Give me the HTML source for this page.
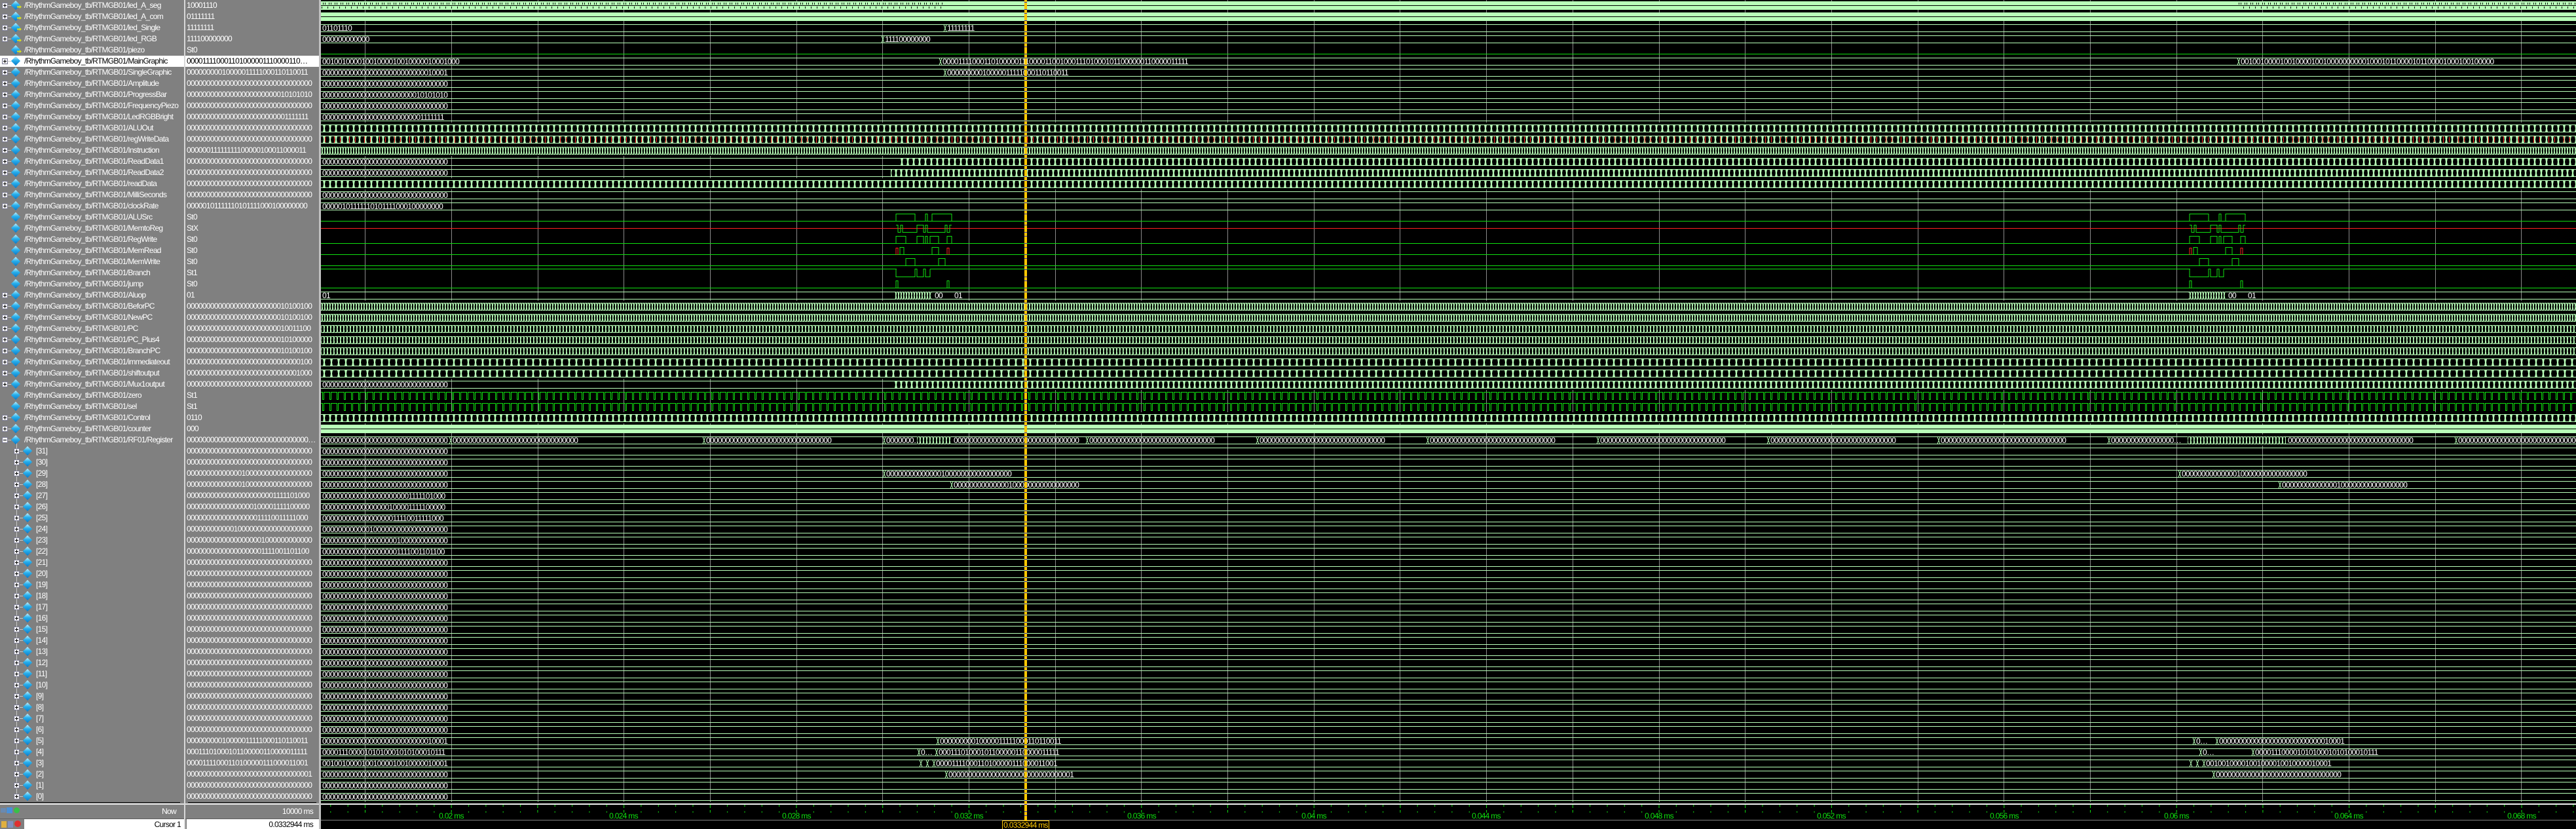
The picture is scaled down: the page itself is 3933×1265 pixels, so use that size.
<!DOCTYPE html>
<html><head><meta charset="utf-8">
<style>
*{box-sizing:border-box}
body{margin:0;width:3933px;height:1265px;background:#000;position:relative;overflow:hidden;font-family:"Liberation Sans",sans-serif;font-size:12px;letter-spacing:-0.7px}
#names{position:absolute;left:0;top:0;width:281px;height:1224px;background:#808080}
#vals{position:absolute;left:283px;top:0;width:204px;height:1224px;background:#808080}
#sep1{position:absolute;left:281px;top:0;width:2px;height:1265px;background:#d8d8d8}
#sep2{position:absolute;left:487px;top:0;width:3px;height:1265px;background:#c0c0c0}
.r{height:17px;position:relative;color:#fff;white-space:nowrap}
.r span{position:absolute;left:37px;top:1px;line-height:15px}
.c span{left:55px}
.sel{background:#fff;color:#000}
.pb{position:absolute;left:3px;top:4px;width:9px;height:9px;background:#f2f2f6;border:1px solid #7a7a90}
.c .pb{left:21px}
.pb:before{content:"";position:absolute;left:1px;top:3px;width:5px;height:1px;background:#000}
.pb.p:after{content:"";position:absolute;left:3px;top:1px;width:1px;height:5px;background:#000}
.ln{position:absolute;left:12px;top:8px;width:5px;height:1px;background:#c8c8c8}
.c .ln{left:30px}
.dm{position:absolute;left:19px;top:3px;width:10px;height:10px;transform:rotate(45deg);background:linear-gradient(135deg,#c8f4ff,#28b0ec 45%,#0a78c8)}
.c .dm{left:37px}
.ar{position:absolute;left:26px;top:8px;width:7px;height:5px;background:#d8e020;clip-path:polygon(0 30%,55% 30%,55% 0,100% 50%,55% 100%,55% 70%,0 70%)}
.tree{position:absolute;left:25px;top:672px;width:1px;height:548px;background:#c8c8c8}
#vals .r span{left:2px}
#bot{position:absolute;left:0;top:1224px;width:487px;height:41px;background:#808080}
svg text{font-family:"Liberation Sans",sans-serif;font-size:12px;letter-spacing:-0.7px}
</style></head><body>
<div id="names">
<div class="tree"></div>
<div class="r"><i class="pb p"></i><i class="ln"></i><i class="dm"></i><i class="ar"></i><span>/RhythmGameboy_tb/RTMGB01/led_A_seg</span></div>
<div class="r"><i class="pb p"></i><i class="ln"></i><i class="dm"></i><i class="ar"></i><span>/RhythmGameboy_tb/RTMGB01/led_A_com</span></div>
<div class="r"><i class="pb p"></i><i class="ln"></i><i class="dm"></i><i class="ar"></i><span>/RhythmGameboy_tb/RTMGB01/led_Single</span></div>
<div class="r"><i class="pb p"></i><i class="ln"></i><i class="dm"></i><i class="ar"></i><span>/RhythmGameboy_tb/RTMGB01/led_RGB</span></div>
<div class="r"><i class="dm"></i><i class="ar"></i><span>/RhythmGameboy_tb/RTMGB01/piezo</span></div>
<div class="r sel"><i class="pb p"></i><i class="ln"></i><i class="dm"></i><span>/RhythmGameboy_tb/RTMGB01/MainGraphic</span></div>
<div class="r"><i class="pb p"></i><i class="ln"></i><i class="dm"></i><span>/RhythmGameboy_tb/RTMGB01/SingleGraphic</span></div>
<div class="r"><i class="pb p"></i><i class="ln"></i><i class="dm"></i><span>/RhythmGameboy_tb/RTMGB01/Amplitude</span></div>
<div class="r"><i class="pb p"></i><i class="ln"></i><i class="dm"></i><span>/RhythmGameboy_tb/RTMGB01/ProgressBar</span></div>
<div class="r"><i class="pb p"></i><i class="ln"></i><i class="dm"></i><span>/RhythmGameboy_tb/RTMGB01/FrequencyPiezo</span></div>
<div class="r"><i class="pb p"></i><i class="ln"></i><i class="dm"></i><span>/RhythmGameboy_tb/RTMGB01/LedRGBBright</span></div>
<div class="r"><i class="pb p"></i><i class="ln"></i><i class="dm"></i><span>/RhythmGameboy_tb/RTMGB01/ALUOut</span></div>
<div class="r"><i class="pb p"></i><i class="ln"></i><i class="dm"></i><span>/RhythmGameboy_tb/RTMGB01/regWriteData</span></div>
<div class="r"><i class="pb p"></i><i class="ln"></i><i class="dm"></i><span>/RhythmGameboy_tb/RTMGB01/Instruction</span></div>
<div class="r"><i class="pb p"></i><i class="ln"></i><i class="dm"></i><span>/RhythmGameboy_tb/RTMGB01/ReadData1</span></div>
<div class="r"><i class="pb p"></i><i class="ln"></i><i class="dm"></i><span>/RhythmGameboy_tb/RTMGB01/ReadData2</span></div>
<div class="r"><i class="pb p"></i><i class="ln"></i><i class="dm"></i><span>/RhythmGameboy_tb/RTMGB01/readData</span></div>
<div class="r"><i class="pb p"></i><i class="ln"></i><i class="dm"></i><span>/RhythmGameboy_tb/RTMGB01/MilliSeconds</span></div>
<div class="r"><i class="pb p"></i><i class="ln"></i><i class="dm"></i><span>/RhythmGameboy_tb/RTMGB01/clockRate</span></div>
<div class="r"><i class="dm"></i><span>/RhythmGameboy_tb/RTMGB01/ALUSrc</span></div>
<div class="r"><i class="dm"></i><span>/RhythmGameboy_tb/RTMGB01/MemtoReg</span></div>
<div class="r"><i class="dm"></i><span>/RhythmGameboy_tb/RTMGB01/RegWrite</span></div>
<div class="r"><i class="dm"></i><span>/RhythmGameboy_tb/RTMGB01/MemRead</span></div>
<div class="r"><i class="dm"></i><span>/RhythmGameboy_tb/RTMGB01/MemWrite</span></div>
<div class="r"><i class="dm"></i><span>/RhythmGameboy_tb/RTMGB01/Branch</span></div>
<div class="r"><i class="dm"></i><span>/RhythmGameboy_tb/RTMGB01/jump</span></div>
<div class="r"><i class="pb p"></i><i class="ln"></i><i class="dm"></i><span>/RhythmGameboy_tb/RTMGB01/Aluop</span></div>
<div class="r"><i class="pb p"></i><i class="ln"></i><i class="dm"></i><span>/RhythmGameboy_tb/RTMGB01/BeforPC</span></div>
<div class="r"><i class="pb p"></i><i class="ln"></i><i class="dm"></i><span>/RhythmGameboy_tb/RTMGB01/NewPC</span></div>
<div class="r"><i class="pb p"></i><i class="ln"></i><i class="dm"></i><span>/RhythmGameboy_tb/RTMGB01/PC</span></div>
<div class="r"><i class="pb p"></i><i class="ln"></i><i class="dm"></i><span>/RhythmGameboy_tb/RTMGB01/PC_Plus4</span></div>
<div class="r"><i class="pb p"></i><i class="ln"></i><i class="dm"></i><span>/RhythmGameboy_tb/RTMGB01/BranchPC</span></div>
<div class="r"><i class="pb p"></i><i class="ln"></i><i class="dm"></i><span>/RhythmGameboy_tb/RTMGB01/immediateout</span></div>
<div class="r"><i class="pb p"></i><i class="ln"></i><i class="dm"></i><span>/RhythmGameboy_tb/RTMGB01/shiftoutput</span></div>
<div class="r"><i class="pb p"></i><i class="ln"></i><i class="dm"></i><span>/RhythmGameboy_tb/RTMGB01/Mux1output</span></div>
<div class="r"><i class="dm"></i><span>/RhythmGameboy_tb/RTMGB01/zero</span></div>
<div class="r"><i class="dm"></i><span>/RhythmGameboy_tb/RTMGB01/sel</span></div>
<div class="r"><i class="pb p"></i><i class="ln"></i><i class="dm"></i><span>/RhythmGameboy_tb/RTMGB01/Control</span></div>
<div class="r"><i class="pb p"></i><i class="ln"></i><i class="dm"></i><span>/RhythmGameboy_tb/RTMGB01/counter</span></div>
<div class="r"><i class="pb"></i><i class="ln"></i><i class="dm"></i><span>/RhythmGameboy_tb/RTMGB01/RF01/Register</span></div>
<div class="r c"><i class="pb p"></i><i class="ln"></i><i class="dm"></i><span>[31]</span></div>
<div class="r c"><i class="pb p"></i><i class="ln"></i><i class="dm"></i><span>[30]</span></div>
<div class="r c"><i class="pb p"></i><i class="ln"></i><i class="dm"></i><span>[29]</span></div>
<div class="r c"><i class="pb p"></i><i class="ln"></i><i class="dm"></i><span>[28]</span></div>
<div class="r c"><i class="pb p"></i><i class="ln"></i><i class="dm"></i><span>[27]</span></div>
<div class="r c"><i class="pb p"></i><i class="ln"></i><i class="dm"></i><span>[26]</span></div>
<div class="r c"><i class="pb p"></i><i class="ln"></i><i class="dm"></i><span>[25]</span></div>
<div class="r c"><i class="pb p"></i><i class="ln"></i><i class="dm"></i><span>[24]</span></div>
<div class="r c"><i class="pb p"></i><i class="ln"></i><i class="dm"></i><span>[23]</span></div>
<div class="r c"><i class="pb p"></i><i class="ln"></i><i class="dm"></i><span>[22]</span></div>
<div class="r c"><i class="pb p"></i><i class="ln"></i><i class="dm"></i><span>[21]</span></div>
<div class="r c"><i class="pb p"></i><i class="ln"></i><i class="dm"></i><span>[20]</span></div>
<div class="r c"><i class="pb p"></i><i class="ln"></i><i class="dm"></i><span>[19]</span></div>
<div class="r c"><i class="pb p"></i><i class="ln"></i><i class="dm"></i><span>[18]</span></div>
<div class="r c"><i class="pb p"></i><i class="ln"></i><i class="dm"></i><span>[17]</span></div>
<div class="r c"><i class="pb p"></i><i class="ln"></i><i class="dm"></i><span>[16]</span></div>
<div class="r c"><i class="pb p"></i><i class="ln"></i><i class="dm"></i><span>[15]</span></div>
<div class="r c"><i class="pb p"></i><i class="ln"></i><i class="dm"></i><span>[14]</span></div>
<div class="r c"><i class="pb p"></i><i class="ln"></i><i class="dm"></i><span>[13]</span></div>
<div class="r c"><i class="pb p"></i><i class="ln"></i><i class="dm"></i><span>[12]</span></div>
<div class="r c"><i class="pb p"></i><i class="ln"></i><i class="dm"></i><span>[11]</span></div>
<div class="r c"><i class="pb p"></i><i class="ln"></i><i class="dm"></i><span>[10]</span></div>
<div class="r c"><i class="pb p"></i><i class="ln"></i><i class="dm"></i><span>[9]</span></div>
<div class="r c"><i class="pb p"></i><i class="ln"></i><i class="dm"></i><span>[8]</span></div>
<div class="r c"><i class="pb p"></i><i class="ln"></i><i class="dm"></i><span>[7]</span></div>
<div class="r c"><i class="pb p"></i><i class="ln"></i><i class="dm"></i><span>[6]</span></div>
<div class="r c"><i class="pb p"></i><i class="ln"></i><i class="dm"></i><span>[5]</span></div>
<div class="r c"><i class="pb p"></i><i class="ln"></i><i class="dm"></i><span>[4]</span></div>
<div class="r c"><i class="pb p"></i><i class="ln"></i><i class="dm"></i><span>[3]</span></div>
<div class="r c"><i class="pb p"></i><i class="ln"></i><i class="dm"></i><span>[2]</span></div>
<div class="r c"><i class="pb p"></i><i class="ln"></i><i class="dm"></i><span>[1]</span></div>
<div class="r c"><i class="pb p"></i><i class="ln"></i><i class="dm"></i><span>[0]</span></div>
</div>
<div id="vals">
<div class="r"><span>10001110</span></div>
<div class="r"><span>01111111</span></div>
<div class="r"><span>11111111</span></div>
<div class="r"><span>111100000000</span></div>
<div class="r"><span>St0</span></div>
<div class="r sel"><span>000011110001101000001110000110…</span></div>
<div class="r"><span>00000000010000011111000110110011</span></div>
<div class="r"><span>00000000000000000000000000000000</span></div>
<div class="r"><span>00000000000000000000000010101010</span></div>
<div class="r"><span>00000000000000000000000000000000</span></div>
<div class="r"><span>00000000000000000000000001111111</span></div>
<div class="r"><span>00000000000000000000000000000000</span></div>
<div class="r"><span>00000000000000000000000000000000</span></div>
<div class="r"><span>00000011111111100000100011000011</span></div>
<div class="r"><span>00000000000000000000000000000000</span></div>
<div class="r"><span>00000000000000000000000000000000</span></div>
<div class="r"><span>00000000000000000000000000000000</span></div>
<div class="r"><span>00000000000000000000000000000000</span></div>
<div class="r"><span>00000101111110101111000100000000</span></div>
<div class="r"><span>St0</span></div>
<div class="r"><span>StX</span></div>
<div class="r"><span>St0</span></div>
<div class="r"><span>St0</span></div>
<div class="r"><span>St0</span></div>
<div class="r"><span>St1</span></div>
<div class="r"><span>St0</span></div>
<div class="r"><span>01</span></div>
<div class="r"><span>00000000000000000000000010100100</span></div>
<div class="r"><span>00000000000000000000000010100100</span></div>
<div class="r"><span>00000000000000000000000010011100</span></div>
<div class="r"><span>00000000000000000000000010100000</span></div>
<div class="r"><span>00000000000000000000000010100100</span></div>
<div class="r"><span>00000000000000000000000000000100</span></div>
<div class="r"><span>00000000000000000000000000001000</span></div>
<div class="r"><span>00000000000000000000000000000000</span></div>
<div class="r"><span>St1</span></div>
<div class="r"><span>St1</span></div>
<div class="r"><span>0110</span></div>
<div class="r"><span>000</span></div>
<div class="r"><span>0000000000000000000000000000000…</span></div>
<div class="r"><span>00000000000000000000000000000000</span></div>
<div class="r"><span>00000000000000000000000000000000</span></div>
<div class="r"><span>00000000000000100000000000000000</span></div>
<div class="r"><span>00000000000000100000000000000000</span></div>
<div class="r"><span>00000000000000000000001111101000</span></div>
<div class="r"><span>00000000000000000100001111100000</span></div>
<div class="r"><span>00000000000000000011110011111000</span></div>
<div class="r"><span>00000000000010000000000000000000</span></div>
<div class="r"><span>00000000000000000001000000000000</span></div>
<div class="r"><span>00000000000000000001111001101100</span></div>
<div class="r"><span>00000000000000000000000000000000</span></div>
<div class="r"><span>00000000000000000000000000000000</span></div>
<div class="r"><span>00000000000000000000000000000000</span></div>
<div class="r"><span>00000000000000000000000000000000</span></div>
<div class="r"><span>00000000000000000000000000000000</span></div>
<div class="r"><span>00000000000000000000000000000000</span></div>
<div class="r"><span>00000000000000000000000000000000</span></div>
<div class="r"><span>00000000000000000000000000000000</span></div>
<div class="r"><span>00000000000000000000000000000000</span></div>
<div class="r"><span>00000000000000000000000000000000</span></div>
<div class="r"><span>00000000000000000000000000000000</span></div>
<div class="r"><span>00000000000000000000000000000000</span></div>
<div class="r"><span>00000000000000000000000000000000</span></div>
<div class="r"><span>00000000000000000000000000000000</span></div>
<div class="r"><span>00000000000000000000000000000000</span></div>
<div class="r"><span>00000000000000000000000000000000</span></div>
<div class="r"><span>00000000010000011111000110110011</span></div>
<div class="r"><span>00011101000101100000110000011111</span></div>
<div class="r"><span>00001111000110100000111000011001</span></div>
<div class="r"><span>00000000000000000000000000000001</span></div>
<div class="r"><span>00000000000000000000000000000000</span></div>
<div class="r"><span>00000000000000000000000000000000</span></div>
</div>
<div id="bot">
  <div style="position:absolute;left:0;top:0;width:275px;height:1px;background:#000"></div>
  <div style="position:absolute;left:287px;top:0;width:196px;height:1px;background:#000"></div>
  <div style="position:absolute;left:0;top:2px;width:487px;height:2px;background:#e0e0e0"></div>
  <div style="position:absolute;left:1px;top:9px;width:8px;height:7px;background:#6a8ab0"></div>
  <div style="position:absolute;left:10px;top:8px;width:9px;height:9px;background:#4a90d8"></div>
  <div style="position:absolute;left:21px;top:8px;width:9px;height:9px;border-radius:50%;background:#38c048"></div>
  <div style="position:absolute;right:218px;top:7px;color:#fff;line-height:14px">Now</div>
  <div style="position:absolute;right:9px;top:7px;color:#fff;line-height:14px">10000 ms</div>
  <div style="position:absolute;left:0;top:25px;width:487px;height:1px;background:#606060"></div>
  <div style="position:absolute;left:2px;top:29px;width:8px;height:10px;background:#e0b040"></div>
  <div style="position:absolute;left:12px;top:29px;width:8px;height:10px;background:#8090c0"></div>
  <div style="position:absolute;left:22px;top:28px;width:10px;height:10px;border-radius:50%;background:#e03030"></div>
  <div style="position:absolute;left:37px;top:26px;width:244px;height:15px;background:#fff"></div>
  <div style="position:absolute;left:285px;top:26px;width:202px;height:15px;background:#fff"></div>
  <div style="position:absolute;right:211px;top:27px;color:#000;line-height:14px">Cursor 1</div>
  <div style="position:absolute;right:9px;top:27px;color:#000;line-height:14px">0.0332944 ms</div>
</div>
<div id="sep1"></div><div id="sep2"></div>

<svg style="position:absolute;left:490px;top:0" width="3443" height="1265" viewBox="490 0 3443 1265">
<defs>
<pattern id="bus" patternUnits="userSpaceOnUse" width="20" height="17"><path d="M0,3.5H20M0,14.5H20" stroke="#b8ffb8"/></pattern>
<pattern id="h4" patternUnits="userSpaceOnUse" width="4" height="17"><path d="M0,9L1,3.5H3L4,9L3,14.5H1Z" fill="none" stroke="#b8ffb8"/><path d="M3,3L4,3L4,15L3,15Z" fill="#b8ffb8"/></pattern>
<pattern id="h5" patternUnits="userSpaceOnUse" width="5" height="17"><path d="M0,9L1,3.5H4L5,9L4,14.5H1Z" fill="none" stroke="#b8ffb8"/><path d="M4,3L5,3L5,15L4,15Z" fill="#b8ffb8"/></pattern>
<pattern id="h8" patternUnits="userSpaceOnUse" width="8" height="17"><path d="M0,9L1.5,3.5H6.5L8,9L6.5,14.5H1.5Z" fill="none" stroke="#b8ffb8"/><path d="M0,3L2,3L1,9L2,15L0,15Z M8,3L6,3L7,9L6,15L8,15Z" fill="#b8ffb8"/></pattern>
<pattern id="h9" patternUnits="userSpaceOnUse" width="9" height="17"><path d="M0,9L1.5,3.5H7.5L9,9L7.5,14.5H1.5Z" fill="none" stroke="#b8ffb8"/><path d="M0,3L2,3L1,9L2,15L0,15Z M9,3L7,3L8,9L7,15L9,15Z" fill="#b8ffb8"/></pattern>
<pattern id="h11" patternUnits="userSpaceOnUse" width="11" height="17"><path d="M0,9L1.5,3.5H9.5L11,9L9.5,14.5H1.5Z" fill="none" stroke="#b8ffb8"/><path d="M0,3L2,3L1,9L2,15L0,15Z M11,3L9,3L10,9L9,15L11,15Z" fill="#b8ffb8"/></pattern>
<pattern id="red" patternUnits="userSpaceOnUse" width="23" height="17"><path d="M4.5,4V14M13.5,5V13" stroke="#ff2020"/></pattern>
<pattern id="sq" patternUnits="userSpaceOnUse" width="11" height="17"><path d="M0,3.5H8.5V14.5H10.5V3.5H11" fill="none" stroke="#10e010"/></pattern>
<pattern id="seg" patternUnits="userSpaceOnUse" width="9" height="17"><rect y="2" width="9" height="13" fill="#b8ffb8"/><rect y="8" width="9" height="1" fill="#000"/><rect x="1" y="4" width="1" height="3" fill="#000"/><rect x="5" y="10" width="1" height="3" fill="#000"/><rect x="7" y="4" width="1" height="3" fill="#000"/></pattern>
<pattern id="cur" patternUnits="userSpaceOnUse" width="4" height="17"><rect width="4" height="17" fill="#ffc800"/><rect y="3" width="4" height="1" fill="#3030c0"/><rect y="14" width="4" height="1" fill="#3030c0"/></pattern>
<pattern id="tk" patternUnits="userSpaceOnUse" x="557" width="131.7" height="12"><rect x="0" y="0" width="1" height="9" fill="#10e010"/><rect x="26.3" y="2" width="1" height="5" fill="#10e010"/><rect x="52.7" y="2" width="1" height="5" fill="#10e010"/><rect x="79" y="2" width="1" height="5" fill="#10e010"/><rect x="105.4" y="2" width="1" height="5" fill="#10e010"/></pattern>
</defs>
<path d="M557.5,0V1224M689.5,0V1224M821.5,0V1224M952.5,0V1224M1084.5,0V1224M1216.5,0V1224M1347.5,0V1224M1479.5,0V1224M1611.5,0V1224M1742.5,0V1224M1874.5,0V1224M2006.5,0V1224M2137.5,0V1224M2269.5,0V1224M2401.5,0V1224M2533.5,0V1224M2664.5,0V1224M2796.5,0V1224M2928.5,0V1224M3059.5,0V1224M3191.5,0V1224M3323.5,0V1224M3454.5,0V1224M3586.5,0V1224M3718.5,0V1224M3849.5,0V1224" stroke="#8a8a8a"/>
<rect x="490" y="34" width="3443" height="34" fill="url(#bus)"/>
<rect x="490" y="85" width="3443" height="238" fill="url(#bus)"/>
<rect x="490" y="442" width="3443" height="153" fill="url(#bus)"/>
<rect x="490" y="629" width="3443" height="17" fill="url(#bus)"/>
<rect x="490" y="663" width="3443" height="561" fill="url(#bus)"/>
<rect x="490" y="0" width="950" height="17" fill="url(#seg)"/>
<rect x="1440" y="2" width="1978" height="13" fill="#b8ffb8"/><rect x="1440" y="8" width="1978" height="1" fill="#000"/>
<rect x="3418" y="0" width="515" height="17" fill="url(#seg)"/>
<rect x="490" y="19" width="3443" height="13" fill="#b8ffb8"/><rect x="490" y="25" width="3443" height="1" fill="#000"/>
<rect x="490" y="187" width="3443" height="17" fill="#000"/><rect x="490" y="187" width="3443" height="17" fill="url(#h9)"/>
<rect x="490" y="204" width="3443" height="17" fill="#000"/><rect x="490" y="204" width="3443" height="17" fill="url(#h9)"/><rect x="490" y="204" width="3443" height="17" fill="url(#red)"/>
<rect x="490" y="221" width="3443" height="17" fill="#000"/><rect x="490" y="221" width="3443" height="17" fill="url(#h4)"/>
<rect x="1373" y="238" width="2560" height="17" fill="#000"/><rect x="1373" y="238" width="2560" height="17" fill="url(#h9)"/>
<rect x="1360" y="255" width="2573" height="17" fill="#000"/><rect x="1360" y="255" width="2573" height="17" fill="url(#h8)"/>
<rect x="490" y="272" width="3443" height="17" fill="#000"/><rect x="490" y="272" width="3443" height="17" fill="url(#h9)"/>
<rect x="490" y="459" width="3443" height="34" fill="#000"/><rect x="490" y="459" width="3443" height="34" fill="url(#h4)"/>
<rect x="490" y="493" width="3443" height="51" fill="#000"/><rect x="490" y="493" width="3443" height="51" fill="url(#h5)"/>
<rect x="490" y="544" width="3443" height="34" fill="#000"/><rect x="490" y="544" width="3443" height="34" fill="url(#h11)"/>
<rect x="1362" y="578" width="2571" height="17" fill="#000"/><rect x="1362" y="578" width="2571" height="17" fill="url(#h8)"/>
<rect x="490" y="595" width="3443" height="34" fill="url(#sq)"/>
<rect x="490" y="629" width="3443" height="17" fill="#000"/><rect x="490" y="629" width="3443" height="17" fill="url(#h9)"/>
<rect x="490" y="648" width="3443" height="13" fill="#b8ffb8"/><rect x="490" y="654" width="3443" height="1" fill="#000"/>
<rect x="1366" y="442" width="57" height="17" fill="#000"/><rect x="1366" y="442" width="57" height="17" fill="url(#h4)"/>
<rect x="3341" y="442" width="57" height="17" fill="#000"/><rect x="3341" y="442" width="57" height="17" fill="url(#h4)"/>
<rect x="1400" y="663" width="53" height="17" fill="#000"/><rect x="1400" y="663" width="53" height="17" fill="url(#h5)"/>
<rect x="3340" y="663" width="150" height="17" fill="#000"/><rect x="3340" y="663" width="150" height="17" fill="url(#h5)"/>
<g stroke="#10e010" fill="none">
<path d="M490,82.5H3933"/>
<path d="M490,337.5H3933"/>
<path d="M490,371.5H3933M490,388.5H3933M490,405.5H3933M490,410.5H3933M490,439.5H3933"/>
</g>
<path d="M490,348.5H3933" stroke="#ff2020"/>
<g id="ra">
<rect x="1369" y="409" width="51" height="3" fill="#000"/>
<g stroke="#10e010" fill="none">
<path d="M1368,337.5V326.5H1397V337.5M1413,337.5V326.5H1416V337.5M1423,337.5V326.5H1453V337.5"/>
<path d="M1368,343.5H1371V354.5H1375V343.5H1378V354.5H1400V343.5H1410V354.5H1413V343.5H1416V354.5H1443V343.5H1446V354.5H1450V343.5H1453"/>
<path d="M1368,371.5V360.5H1383V371.5H1400V360.5H1410V371.5H1413V360.5H1416V371.5H1420V360.5H1433V371.5H1446V360.5H1453V371.5"/>
<path d="M1374,388.5V377.5H1380V388.5M1423,388.5V377.5H1433V388.5"/>
<path d="M1383,405.5V394.5H1397V405.5M1433,405.5V394.5H1443V405.5"/>
<path d="M1368,410.5V422.5H1397V410.5H1400V422.5H1410V410.5H1413V422.5H1420V410.5"/>
<path d="M1368,439.5V428.5H1371V439.5M1446,439.5V428.5H1449V439.5"/>
</g>
<path d="M1368,388.5V378.5H1371V388.5M1446,388.5V378.5H1449V388.5" stroke="#ff2020" fill="none"/>
</g>
<use href="#ra" transform="translate(1975,0)"/>
<g stroke="#b8ffb8" fill="none">
<path d="M1441,37.5L1445,48.5M1441,48.5L1445,37.5"/>
<path d="M1346,54.5L1350,65.5M1346,65.5L1350,54.5"/>
<path d="M1434,88.5L1438,99.5M1434,99.5L1438,88.5M3416,88.5L3420,99.5M3416,99.5L3420,88.5"/>
<path d="M1441,105.5L1445,116.5M1441,116.5L1445,105.5"/>
<path d="M686,666.5L690,677.5M686,677.5L690,666.5M1073,666.5L1077,677.5M1073,677.5L1077,666.5M1348,666.5L1352,677.5M1348,677.5L1352,666.5M1658,666.5L1662,677.5M1658,677.5L1662,666.5M1918,666.5L1922,677.5M1918,677.5L1922,666.5M2178,666.5L2182,677.5M2178,677.5L2182,666.5M2438,666.5L2442,677.5M2438,677.5L2442,666.5M2698,666.5L2702,677.5M2698,677.5L2702,666.5M2958,666.5L2962,677.5M2958,677.5L2962,666.5M3218,666.5L3222,677.5M3218,677.5L3222,666.5M3748,666.5L3752,677.5M3748,677.5L3752,666.5"/>
<path d="M1348,717.5L1352,728.5M1348,728.5L1352,717.5M3326,717.5L3330,728.5M3326,728.5L3330,717.5"/>
<path d="M1451,734.5L1455,745.5M1451,745.5L1455,734.5M3479,734.5L3483,745.5M3479,745.5L3483,734.5"/>
<path d="M1430,1125.5L1434,1136.5M1430,1136.5L1434,1125.5M3348,1125.5L3352,1136.5M3348,1136.5L3352,1125.5M3383,1125.5L3387,1136.5M3383,1136.5L3387,1125.5"/>
<path d="M1401,1142.5L1405,1153.5M1401,1153.5L1405,1142.5M1428,1142.5L1432,1153.5M1428,1153.5L1432,1142.5M3358,1142.5L3362,1153.5M3358,1153.5L3362,1142.5M3438,1142.5L3442,1153.5M3438,1153.5L3442,1142.5"/>
<path d="M1404,1159.5L1408,1170.5M1404,1170.5L1408,1159.5M1414,1159.5L1418,1170.5M1414,1170.5L1418,1159.5M1424,1159.5L1428,1170.5M1424,1170.5L1428,1159.5M3343,1159.5L3347,1170.5M3343,1170.5L3347,1159.5M3353,1159.5L3357,1170.5M3353,1170.5L3357,1159.5M3363,1159.5L3367,1170.5M3363,1170.5L3367,1159.5"/>
<path d="M1443,1176.5L1447,1187.5M1443,1187.5L1447,1176.5M3378,1176.5L3382,1187.5M3378,1187.5L3382,1176.5"/>
</g>
<g fill="#fff">
<text x="492" y="47">01101110</text><text x="1446" y="47">11111111</text>
<text x="492" y="64">000000000000</text><text x="1351" y="64">111100000000</text>
<text x="492" y="98">00100100001001000010010000010001000</text>
<text x="1439" y="98">00001111000110100000111000011001000111010001011000000110000011111</text>
<text x="3421" y="98">00100100001001000010010000000000100010110000101100001000100100000</text>
<text x="492" y="115">00000000000000000000000000010001</text><text x="1446" y="115">00000000010000011111000110110011</text>
<text x="492" y="132">00000000000000000000000000000000</text>
<text x="492" y="149">00000000000000000000000010101010</text>
<text x="492" y="166">00000000000000000000000000000000</text>
<text x="492" y="183">00000000000000000000000001111111</text>
<text x="492" y="251">00000000000000000000000000000000</text>
<text x="492" y="268">00000000000000000000000000000000</text>
<text x="492" y="302">00000000000000000000000000000000</text>
<text x="492" y="319">00000101111110101111000100000000</text>
<text x="492" y="455">01</text><text x="1427" y="455">00</text><text x="1457" y="455">01</text><text x="3402" y="455">00</text><text x="3432" y="455">01</text>
<text x="492" y="591">00000000000000000000000000000000</text>
<text x="492" y="676">00000000000000000000000000000000</text>
<text x="691" y="676">00000000000000000000000000000000</text>
<text x="1078" y="676">00000000000000000000000000000000</text>
<text x="1353" y="676">0000000…</text>
<text x="1456" y="676">00000000000000000000000000000000</text>
<text x="1663" y="676">00000000000000000000000000000000</text>
<text x="1923" y="676">00000000000000000000000000000000</text>
<text x="2183" y="676">00000000000000000000000000000000</text>
<text x="2443" y="676">00000000000000000000000000000000</text>
<text x="2703" y="676">00000000000000000000000000000000</text>
<text x="2963" y="676">00000000000000000000000000000000</text>
<text x="3223" y="676">0000000000000000…</text>
<text x="3493" y="676">00000000000000000000000000000000</text>
<text x="3753" y="676">00000000000000000000000000000000</text>
<text x="492" y="693">00000000000000000000000000000000</text>
<text x="492" y="710">00000000000000000000000000000000</text>
<text x="492" y="727">00000000000000000000000000000000</text><text x="1353" y="727">00000000000000100000000000000000</text><text x="3331" y="727">00000000000000100000000000000000</text>
<text x="492" y="744">00000000000000000000000000000000</text><text x="1456" y="744">00000000000000100000000000000000</text><text x="3484" y="744">00000000000000100000000000000000</text>
<text x="492" y="761">00000000000000000000001111101000</text>
<text x="492" y="778">00000000000000000100001111100000</text>
<text x="492" y="795">00000000000000000011110011111000</text>
<text x="492" y="812">00000000000010000000000000000000</text>
<text x="492" y="829">00000000000000000001000000000000</text>
<text x="492" y="846">00000000000000000001111001101100</text>
<text x="492" y="863">00000000000000000000000000000000</text>
<text x="492" y="880">00000000000000000000000000000000</text>
<text x="492" y="897">00000000000000000000000000000000</text>
<text x="492" y="914">00000000000000000000000000000000</text>
<text x="492" y="931">00000000000000000000000000000000</text>
<text x="492" y="948">00000000000000000000000000000000</text>
<text x="492" y="965">00000000000000000000000000000000</text>
<text x="492" y="982">00000000000000000000000000000000</text>
<text x="492" y="999">00000000000000000000000000000000</text>
<text x="492" y="1016">00000000000000000000000000000000</text>
<text x="492" y="1033">00000000000000000000000000000000</text>
<text x="492" y="1050">00000000000000000000000000000000</text>
<text x="492" y="1067">00000000000000000000000000000000</text>
<text x="492" y="1084">00000000000000000000000000000000</text>
<text x="492" y="1101">00000000000000000000000000000000</text>
<text x="492" y="1118">00000000000000000000000000000000</text>
<text x="492" y="1135">00000000000000000000000000010001</text><text x="1435" y="1135">00000000010000011111000110110011</text><text x="3353" y="1135">0…</text><text x="3388" y="1135">00000000000000000000000000010001</text>
<text x="492" y="1152">00001110000101010001010100010111</text><text x="1406" y="1152">0…</text><text x="1433" y="1152">00011101000101100000110000011111</text><text x="3363" y="1152">0…</text><text x="3443" y="1152">00001110000101010001010100010111</text>
<text x="492" y="1169">00100100001001000010010000010001</text><text x="1429" y="1169">00001111000110100000111000011001</text><text x="3368" y="1169">00100100001001000010010000010001</text>
<text x="492" y="1186">00000000000000000000000000000000</text><text x="1448" y="1186">00000000000000000000000000000001</text><text x="3383" y="1186">00000000000000000000000000000000</text>
<text x="492" y="1203">00000000000000000000000000000000</text>
<text x="492" y="1220">00000000000000000000000000000000</text>
</g>
<rect x="490" y="1226" width="3443" height="2" fill="#f0f0f0"/>
<rect x="490" y="1228" width="3443" height="12" fill="url(#tk)"/>
<g fill="#10e010" text-anchor="middle">
<text x="689" y="1249">0.02 ms</text><text x="952" y="1249">0.024 ms</text><text x="1216" y="1249">0.028 ms</text><text x="1479" y="1249">0.032 ms</text><text x="1743" y="1249">0.036 ms</text><text x="2006" y="1249">0.04 ms</text><text x="2269" y="1249">0.044 ms</text><text x="2533" y="1249">0.048 ms</text><text x="2796" y="1249">0.052 ms</text><text x="3060" y="1249">0.056 ms</text><text x="3323" y="1249">0.06 ms</text><text x="3586" y="1249">0.064 ms</text><text x="3850" y="1249">0.068 ms</text>
</g>
<rect x="490" y="1251" width="3443" height="1" fill="#808080"/>
<rect x="1564" y="0" width="4" height="1253" fill="url(#cur)"/>
<rect x="1530.5" y="1252.5" width="71" height="13" fill="#000" stroke="#ffc800"/>
<text x="1566" y="1263" fill="#ffc800" text-anchor="middle">0.0332944 ms</text>
</svg>
</body></html>
